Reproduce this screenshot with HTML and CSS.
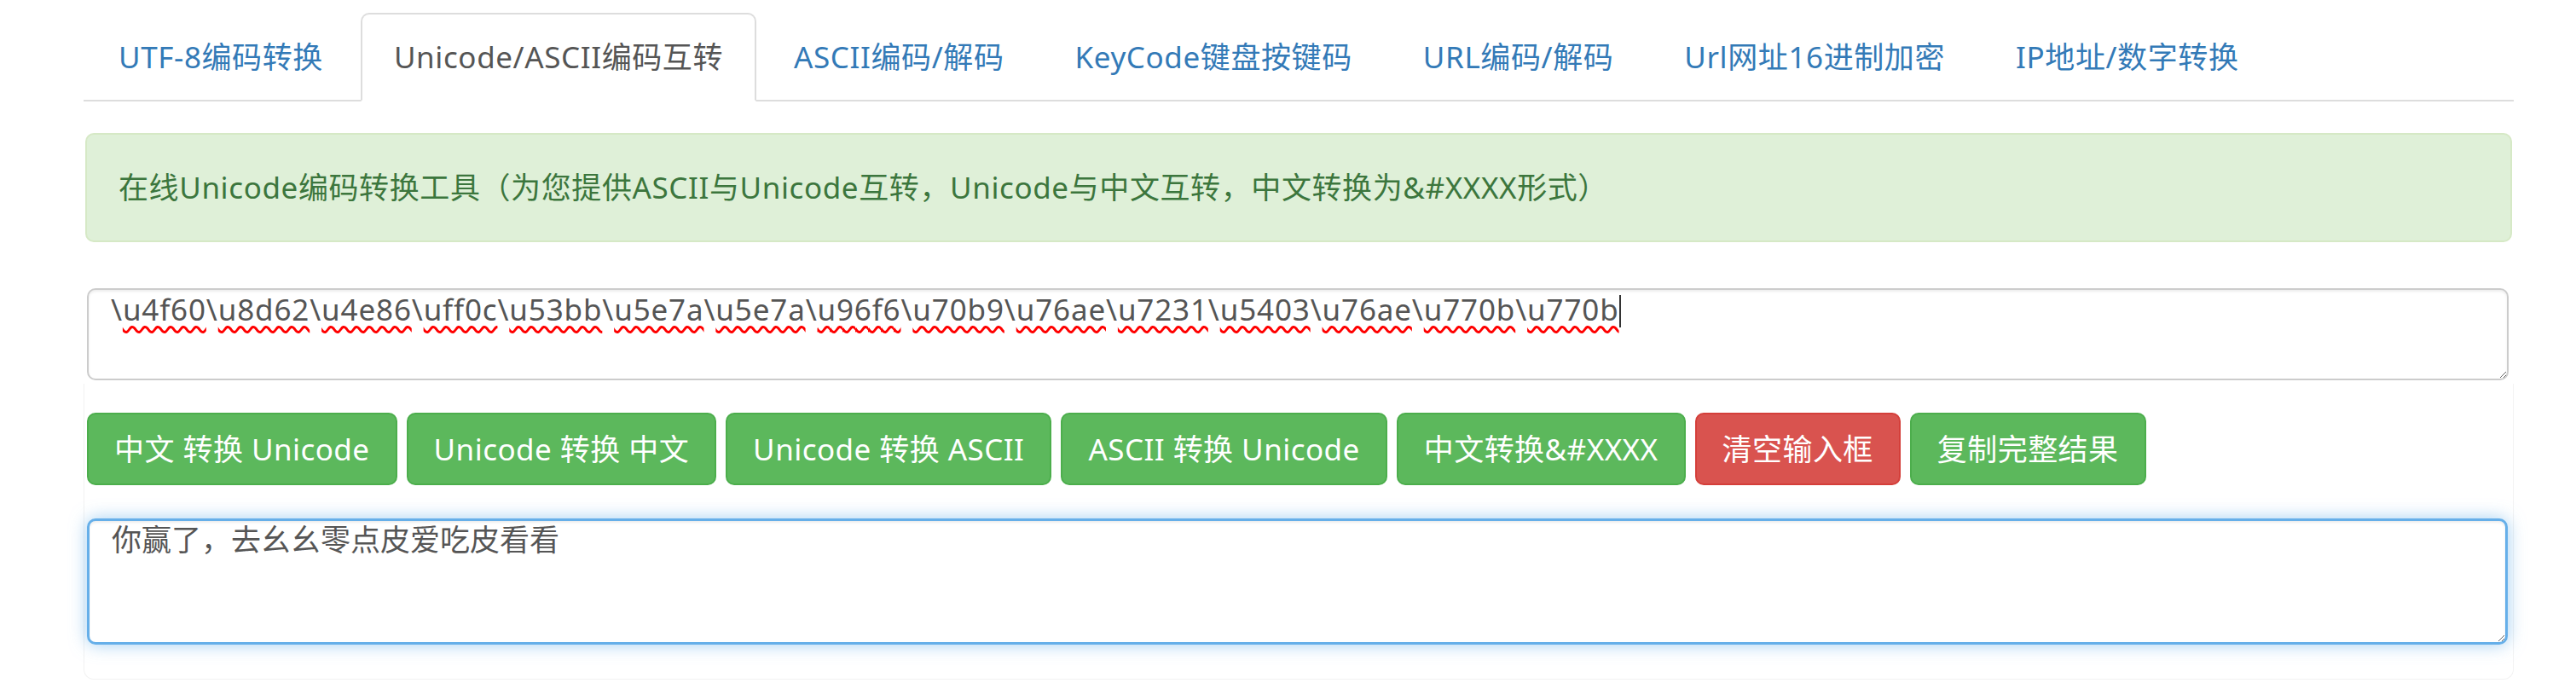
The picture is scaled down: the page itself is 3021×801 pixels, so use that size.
FILE: index.html
```html
<!DOCTYPE html>
<html lang="zh-CN">
<head>
<meta charset="utf-8">
<title>Unicode/ASCII编码互转</title>
<link rel="stylesheet" href="styles.css">
</head>
<body>
<div class="wrap">
  <ul class="tabs">
    <li><a href="#">UTF-8编码转换</a></li>
    <li class="active"><a href="#">Unicode/ASCII编码互转</a></li>
    <li><a href="#">ASCII编码/解码</a></li>
    <li><a href="#">KeyCode键盘按键码</a></li>
    <li><a href="#">URL编码/解码</a></li>
    <li><a href="#">Url网址16进制加密</a></li>
    <li><a href="#">IP地址/数字转换</a></li>
  </ul>

  <div class="alert">在线Unicode编码转换工具（为您提供ASCII与Unicode互转，Unicode与中文互转，中文转换为&amp;#XXXX形式）</div>

  <div class="input-box" contenteditable="true" spellcheck="false">\<span class="sp">u4f60</span>\<span class="sp">u8d62</span>\<span class="sp">u4e86</span>\<span class="sp">uff0c</span>\<span class="sp">u53bb</span>\<span class="sp">u5e7a</span>\<span class="sp">u5e7a</span>\<span class="sp">u96f6</span>\<span class="sp">u70b9</span>\<span class="sp">u76ae</span>\<span class="sp">u7231</span>\<span class="sp">u5403</span>\<span class="sp">u76ae</span>\<span class="sp">u770b</span>\<span class="sp">u770b</span><span class="caret"></span></div>

  <div class="panel">
    <div class="btns">
      <button class="btn btn-green">中文 转换 Unicode</button>
      <button class="btn btn-green">Unicode 转换 中文</button>
      <button class="btn btn-green">Unicode 转换 ASCII</button>
      <button class="btn btn-green">ASCII 转换 Unicode</button>
      <button class="btn btn-green">中文转换&amp;#XXXX</button>
      <button class="btn btn-red">清空输入框</button>
      <button class="btn btn-green">复制完整结果</button>
    </div>
    <textarea class="output" spellcheck="false">你赢了，去幺幺零点皮爱吃皮看看</textarea>
  </div>
</div>
</body>
</html>
```

FILE: styles.css
```css
* { box-sizing: border-box; }

html, body {
  margin: 0;
  padding: 0;
  background: #fff;
}

body {
  font-family: "Noto Sans", "Noto Sans CJK SC", sans-serif;
  font-size: 35px;
  letter-spacing: 0.6px;
  color: #555;
}

.wrap {
  padding: 15px 73px 0 98px;
}

/* tabs */
.tabs {
  list-style: none;
  margin: 0;
  padding: 0 0 0 2px;
  display: flex;
  border-bottom: 2px solid #ddd;
}

.tabs li {
  margin-bottom: -2px;
  margin-right: 5px;
}

.tabs a {
  display: block;
  padding: 25px 37px;
  line-height: 50px;
  border: 2px solid transparent;
  border-radius: 10px 10px 0 0;
  color: #337ab7;
  text-decoration: none;
  white-space: nowrap;
}

.tabs li.active a {
  color: #555;
  background: #fff;
  border-color: #ddd #ddd transparent #ddd;
}

/* alert */
.alert {
  margin: 37px 2px 0 2px;
  padding: 37px 37px;
  line-height: 50px;
  background: #dff0d8;
  border: 2px solid #d6e9c6;
  border-radius: 10px;
  color: #3c763d;
  white-space: nowrap;
}

/* first input (textarea look) */
.input-box {
  margin: 54px 6px 0 4px;
  height: 108px;
  padding: 3px 30px 0 26px;
  line-height: 40px;
  letter-spacing: 0.85px;
  border: 2px solid #ccc;
  border-radius: 10px;
  box-shadow: inset 0 2px 3px rgba(0, 0, 0, .075);
  color: #555;
  background: #fff;
  overflow: hidden;
  resize: vertical;
  white-space: nowrap;
  outline: none;
}

.sp {
  text-decoration: underline wavy #ff0000;
  text-decoration-thickness: 2.5px;
  text-underline-offset: 6px;
}

.caret {
  display: inline-block;
  width: 2px;
  height: 38px;
  background: #333;
  vertical-align: -8px;
}

/* panel */
.panel {
  margin-top: 4px;
  padding: 34px 0 40px 0;
  border: 1px solid #f2f2f2;
  border-top: 0;
  border-radius: 0 0 12px 12px;
}

.btns {
  display: flex;
  gap: 11px;
  margin-left: 3px;
}

.btn {
  font-family: "Noto Sans", "Noto Sans CJK SC", sans-serif;
  font-size: 35px;
  letter-spacing: 0.45px;
  height: 85px;
  line-height: 81px;
  padding: 0 30px;
  color: #fff;
  border: 2px solid;
  border-radius: 10px;
  white-space: nowrap;
  cursor: pointer;
}

.btn-green {
  background: #5cb85c;
  border-color: #4cae4c;
}

.btn-red {
  background: #d9534f;
  border-color: #d43f3a;
}

.output {
  display: block;
  margin: 39px 6px 0 3px;
  width: calc(100% - 9px);
  height: 148px;
  padding: 2px 26px;
  line-height: 40px;
  font-family: "Noto Sans", "Noto Sans CJK SC", sans-serif;
  font-size: 35px;
  letter-spacing: 0;
  color: #555;
  border: 3px solid #66afe9;
  border-radius: 10px;
  outline: none;
  box-shadow: inset 0 2px 3px rgba(0, 0, 0, .075), 0 0 20px rgba(102, 175, 233, .6);
  resize: vertical;
}
```
